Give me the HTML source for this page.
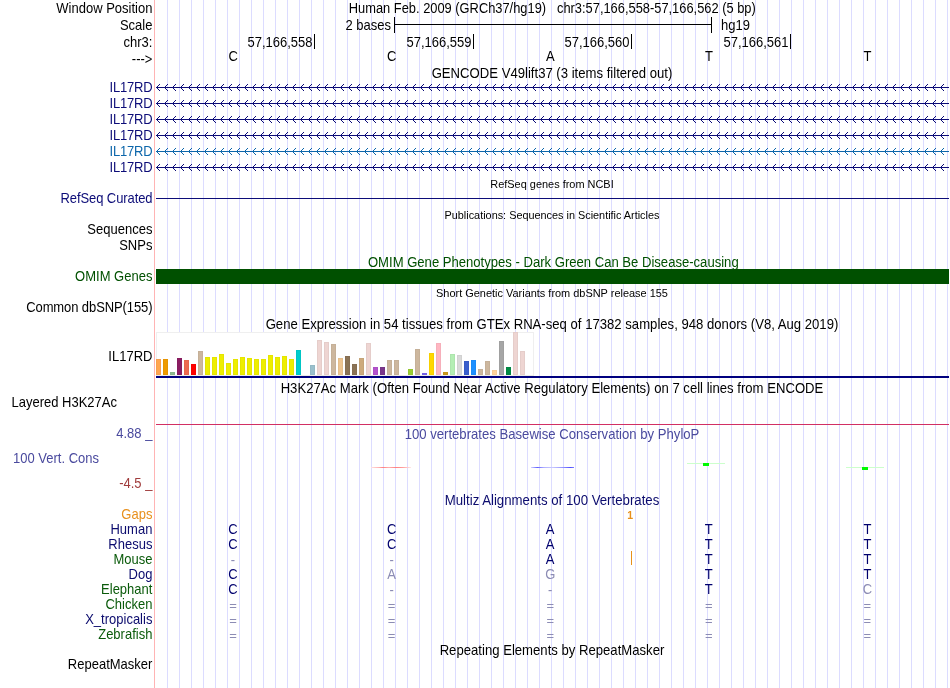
<!DOCTYPE html>
<html><head><meta charset="utf-8"><title>UCSC Genome Browser</title>
<style>
html,body{margin:0;padding:0;background:#fff;}
body{width:950px;height:688px;position:relative;overflow:hidden;font-family:"Liberation Sans",sans-serif;font-size:13px;color:#000;}
.t{position:absolute;white-space:pre;line-height:15px;height:15px;font-size:13px;transform:scaleY(1.09);transform-origin:0 12px;}
.s{font-size:10.95px;}
.c{font-size:13.13px;}
.c.s{font-size:10.95px;transform:none;}
.r{right:797.6px;text-align:right;}
.c{left:155px;width:794px;text-align:center;}
.b{position:absolute;width:20px;text-align:center;margin-left:-10px;line-height:15px;height:15px;font-size:13px;transform:scaleY(1.09);transform-origin:0 12px;}
.x{position:absolute;}
svg{position:absolute;left:0;top:0;}
#pg{position:absolute;left:0;top:0;width:950px;height:688px;will-change:transform;}
</style></head><body><div id="pg">
<svg width="950" height="688" viewBox="0 0 950 688" shape-rendering="crispEdges">
<rect x="154" y="0" width="1" height="688" fill="#ffb4b4"/>
<path d="M167.5 0V688M179.5 0V688M191.5 0V688M203.5 0V688M215.5 0V688M227.5 0V688M239.5 0V688M251.5 0V688M263.5 0V688M275.5 0V688M287.5 0V688M299.5 0V688M311.5 0V688M323.5 0V688M335.5 0V688M347.5 0V688M359.5 0V688M371.5 0V688M383.5 0V688M395.5 0V688M407.5 0V688M419.5 0V688M431.5 0V688M443.5 0V688M455.5 0V688M467.5 0V688M479.5 0V688M491.5 0V688M503.5 0V688M515.5 0V688M527.5 0V688M539.5 0V688M551.5 0V688M563.5 0V688M575.5 0V688M587.5 0V688M599.5 0V688M611.5 0V688M623.5 0V688M635.5 0V688M647.5 0V688M659.5 0V688M671.5 0V688M683.5 0V688M695.5 0V688M707.5 0V688M719.5 0V688M731.5 0V688M743.5 0V688M755.5 0V688M767.5 0V688M779.5 0V688M791.5 0V688M803.5 0V688M815.5 0V688M827.5 0V688M839.5 0V688M851.5 0V688M863.5 0V688M875.5 0V688M887.5 0V688M899.5 0V688M911.5 0V688M923.5 0V688M935.5 0V688M947.5 0V688" stroke="#dcdcff" stroke-width="1" fill="none"/>
</svg>
<div class="t r" style="top:0.90px">Window Position</div>
<div class="t r" style="top:17.80px">Scale</div>
<div class="t r" style="top:34.80px">chr3:</div>
<div class="t r" style="top:51.70px">---&gt;</div>
<div class="t" id="tp1" style="left:348.8px;top:0.5px;font-size:12.87px">Human Feb. 2009 (GRCh37/hg19)</div>
<div class="t" id="tp2" style="left:557px;top:0.5px;font-size:12.87px">chr3:57,166,558-57,166,562 (5 bp)</div>
<div class="x" style="left:394px;top:24px;width:318px;height:1px;background:#000"></div>
<div class="x" style="left:394px;top:17px;width:1px;height:16px;background:#000"></div>
<div class="x" style="left:711px;top:17px;width:1px;height:16px;background:#000"></div>
<div class="t" style="right:559px;top:17.5px;text-align:right">2 bases</div>
<div class="t" style="left:721px;top:17.5px">hg19</div>
<div class="x" style="left:314px;top:34px;width:1px;height:15px;background:#000"></div>
<div class="t" style="right:637.5px;top:35px;text-align:right">57,166,558</div>
<div class="x" style="left:473px;top:34px;width:1px;height:15px;background:#000"></div>
<div class="t" style="right:478.5px;top:35px;text-align:right">57,166,559</div>
<div class="x" style="left:631px;top:34px;width:1px;height:15px;background:#000"></div>
<div class="t" style="right:320.5px;top:35px;text-align:right">57,166,560</div>
<div class="x" style="left:790px;top:34px;width:1px;height:15px;background:#000"></div>
<div class="t" style="right:161.5px;top:35px;text-align:right">57,166,561</div>
<div class="b" style="left:233.2px;top:49px">C</div>
<div class="b" style="left:391.8px;top:49px">C</div>
<div class="b" style="left:550.4px;top:49px">A</div>
<div class="b" style="left:709.0px;top:49px">T</div>
<div class="b" style="left:867.6px;top:49px">T</div>
<div class="t c" style="top:66.00px">GENCODE V49lift37 (3 items filtered out)</div>
<svg width="950" height="688" viewBox="0 0 950 688">
<defs><pattern id="ch" x="156.5" y="0" width="8" height="7" patternUnits="userSpaceOnUse"><path d="M3.5 0.5L0.5 3.5L3.5 6.5" fill="none" stroke-width="1"/></pattern></defs>
<g stroke="#0c0c78" fill="none"><path d="M156 87.5H949" stroke-width="1" shape-rendering="crispEdges"/>
<path d="M160 84l-3.5 3.5l3.5 3.5M168 84l-3.5 3.5l3.5 3.5M176 84l-3.5 3.5l3.5 3.5M184 84l-3.5 3.5l3.5 3.5M192 84l-3.5 3.5l3.5 3.5M200 84l-3.5 3.5l3.5 3.5M208 84l-3.5 3.5l3.5 3.5M216 84l-3.5 3.5l3.5 3.5M224 84l-3.5 3.5l3.5 3.5M232 84l-3.5 3.5l3.5 3.5M240 84l-3.5 3.5l3.5 3.5M248 84l-3.5 3.5l3.5 3.5M256 84l-3.5 3.5l3.5 3.5M264 84l-3.5 3.5l3.5 3.5M272 84l-3.5 3.5l3.5 3.5M280 84l-3.5 3.5l3.5 3.5M288 84l-3.5 3.5l3.5 3.5M296 84l-3.5 3.5l3.5 3.5M304 84l-3.5 3.5l3.5 3.5M312 84l-3.5 3.5l3.5 3.5M320 84l-3.5 3.5l3.5 3.5M328 84l-3.5 3.5l3.5 3.5M336 84l-3.5 3.5l3.5 3.5M344 84l-3.5 3.5l3.5 3.5M352 84l-3.5 3.5l3.5 3.5M360 84l-3.5 3.5l3.5 3.5M368 84l-3.5 3.5l3.5 3.5M376 84l-3.5 3.5l3.5 3.5M384 84l-3.5 3.5l3.5 3.5M392 84l-3.5 3.5l3.5 3.5M400 84l-3.5 3.5l3.5 3.5M408 84l-3.5 3.5l3.5 3.5M416 84l-3.5 3.5l3.5 3.5M424 84l-3.5 3.5l3.5 3.5M432 84l-3.5 3.5l3.5 3.5M440 84l-3.5 3.5l3.5 3.5M448 84l-3.5 3.5l3.5 3.5M456 84l-3.5 3.5l3.5 3.5M464 84l-3.5 3.5l3.5 3.5M472 84l-3.5 3.5l3.5 3.5M480 84l-3.5 3.5l3.5 3.5M488 84l-3.5 3.5l3.5 3.5M496 84l-3.5 3.5l3.5 3.5M504 84l-3.5 3.5l3.5 3.5M512 84l-3.5 3.5l3.5 3.5M520 84l-3.5 3.5l3.5 3.5M528 84l-3.5 3.5l3.5 3.5M536 84l-3.5 3.5l3.5 3.5M544 84l-3.5 3.5l3.5 3.5M552 84l-3.5 3.5l3.5 3.5M560 84l-3.5 3.5l3.5 3.5M568 84l-3.5 3.5l3.5 3.5M576 84l-3.5 3.5l3.5 3.5M584 84l-3.5 3.5l3.5 3.5M592 84l-3.5 3.5l3.5 3.5M600 84l-3.5 3.5l3.5 3.5M608 84l-3.5 3.5l3.5 3.5M616 84l-3.5 3.5l3.5 3.5M624 84l-3.5 3.5l3.5 3.5M632 84l-3.5 3.5l3.5 3.5M640 84l-3.5 3.5l3.5 3.5M648 84l-3.5 3.5l3.5 3.5M656 84l-3.5 3.5l3.5 3.5M664 84l-3.5 3.5l3.5 3.5M672 84l-3.5 3.5l3.5 3.5M680 84l-3.5 3.5l3.5 3.5M688 84l-3.5 3.5l3.5 3.5M696 84l-3.5 3.5l3.5 3.5M704 84l-3.5 3.5l3.5 3.5M712 84l-3.5 3.5l3.5 3.5M720 84l-3.5 3.5l3.5 3.5M728 84l-3.5 3.5l3.5 3.5M736 84l-3.5 3.5l3.5 3.5M744 84l-3.5 3.5l3.5 3.5M752 84l-3.5 3.5l3.5 3.5M760 84l-3.5 3.5l3.5 3.5M768 84l-3.5 3.5l3.5 3.5M776 84l-3.5 3.5l3.5 3.5M784 84l-3.5 3.5l3.5 3.5M792 84l-3.5 3.5l3.5 3.5M800 84l-3.5 3.5l3.5 3.5M808 84l-3.5 3.5l3.5 3.5M816 84l-3.5 3.5l3.5 3.5M824 84l-3.5 3.5l3.5 3.5M832 84l-3.5 3.5l3.5 3.5M840 84l-3.5 3.5l3.5 3.5M848 84l-3.5 3.5l3.5 3.5M856 84l-3.5 3.5l3.5 3.5M864 84l-3.5 3.5l3.5 3.5M872 84l-3.5 3.5l3.5 3.5M880 84l-3.5 3.5l3.5 3.5M888 84l-3.5 3.5l3.5 3.5M896 84l-3.5 3.5l3.5 3.5M904 84l-3.5 3.5l3.5 3.5M912 84l-3.5 3.5l3.5 3.5M920 84l-3.5 3.5l3.5 3.5M928 84l-3.5 3.5l3.5 3.5M936 84l-3.5 3.5l3.5 3.5M944 84l-3.5 3.5l3.5 3.5" stroke-width="1"/></g>
<g stroke="#0c0c78" fill="none"><path d="M156 103.5H949" stroke-width="1" shape-rendering="crispEdges"/>
<path d="M160 100l-3.5 3.5l3.5 3.5M168 100l-3.5 3.5l3.5 3.5M176 100l-3.5 3.5l3.5 3.5M184 100l-3.5 3.5l3.5 3.5M192 100l-3.5 3.5l3.5 3.5M200 100l-3.5 3.5l3.5 3.5M208 100l-3.5 3.5l3.5 3.5M216 100l-3.5 3.5l3.5 3.5M224 100l-3.5 3.5l3.5 3.5M232 100l-3.5 3.5l3.5 3.5M240 100l-3.5 3.5l3.5 3.5M248 100l-3.5 3.5l3.5 3.5M256 100l-3.5 3.5l3.5 3.5M264 100l-3.5 3.5l3.5 3.5M272 100l-3.5 3.5l3.5 3.5M280 100l-3.5 3.5l3.5 3.5M288 100l-3.5 3.5l3.5 3.5M296 100l-3.5 3.5l3.5 3.5M304 100l-3.5 3.5l3.5 3.5M312 100l-3.5 3.5l3.5 3.5M320 100l-3.5 3.5l3.5 3.5M328 100l-3.5 3.5l3.5 3.5M336 100l-3.5 3.5l3.5 3.5M344 100l-3.5 3.5l3.5 3.5M352 100l-3.5 3.5l3.5 3.5M360 100l-3.5 3.5l3.5 3.5M368 100l-3.5 3.5l3.5 3.5M376 100l-3.5 3.5l3.5 3.5M384 100l-3.5 3.5l3.5 3.5M392 100l-3.5 3.5l3.5 3.5M400 100l-3.5 3.5l3.5 3.5M408 100l-3.5 3.5l3.5 3.5M416 100l-3.5 3.5l3.5 3.5M424 100l-3.5 3.5l3.5 3.5M432 100l-3.5 3.5l3.5 3.5M440 100l-3.5 3.5l3.5 3.5M448 100l-3.5 3.5l3.5 3.5M456 100l-3.5 3.5l3.5 3.5M464 100l-3.5 3.5l3.5 3.5M472 100l-3.5 3.5l3.5 3.5M480 100l-3.5 3.5l3.5 3.5M488 100l-3.5 3.5l3.5 3.5M496 100l-3.5 3.5l3.5 3.5M504 100l-3.5 3.5l3.5 3.5M512 100l-3.5 3.5l3.5 3.5M520 100l-3.5 3.5l3.5 3.5M528 100l-3.5 3.5l3.5 3.5M536 100l-3.5 3.5l3.5 3.5M544 100l-3.5 3.5l3.5 3.5M552 100l-3.5 3.5l3.5 3.5M560 100l-3.5 3.5l3.5 3.5M568 100l-3.5 3.5l3.5 3.5M576 100l-3.5 3.5l3.5 3.5M584 100l-3.5 3.5l3.5 3.5M592 100l-3.5 3.5l3.5 3.5M600 100l-3.5 3.5l3.5 3.5M608 100l-3.5 3.5l3.5 3.5M616 100l-3.5 3.5l3.5 3.5M624 100l-3.5 3.5l3.5 3.5M632 100l-3.5 3.5l3.5 3.5M640 100l-3.5 3.5l3.5 3.5M648 100l-3.5 3.5l3.5 3.5M656 100l-3.5 3.5l3.5 3.5M664 100l-3.5 3.5l3.5 3.5M672 100l-3.5 3.5l3.5 3.5M680 100l-3.5 3.5l3.5 3.5M688 100l-3.5 3.5l3.5 3.5M696 100l-3.5 3.5l3.5 3.5M704 100l-3.5 3.5l3.5 3.5M712 100l-3.5 3.5l3.5 3.5M720 100l-3.5 3.5l3.5 3.5M728 100l-3.5 3.5l3.5 3.5M736 100l-3.5 3.5l3.5 3.5M744 100l-3.5 3.5l3.5 3.5M752 100l-3.5 3.5l3.5 3.5M760 100l-3.5 3.5l3.5 3.5M768 100l-3.5 3.5l3.5 3.5M776 100l-3.5 3.5l3.5 3.5M784 100l-3.5 3.5l3.5 3.5M792 100l-3.5 3.5l3.5 3.5M800 100l-3.5 3.5l3.5 3.5M808 100l-3.5 3.5l3.5 3.5M816 100l-3.5 3.5l3.5 3.5M824 100l-3.5 3.5l3.5 3.5M832 100l-3.5 3.5l3.5 3.5M840 100l-3.5 3.5l3.5 3.5M848 100l-3.5 3.5l3.5 3.5M856 100l-3.5 3.5l3.5 3.5M864 100l-3.5 3.5l3.5 3.5M872 100l-3.5 3.5l3.5 3.5M880 100l-3.5 3.5l3.5 3.5M888 100l-3.5 3.5l3.5 3.5M896 100l-3.5 3.5l3.5 3.5M904 100l-3.5 3.5l3.5 3.5M912 100l-3.5 3.5l3.5 3.5M920 100l-3.5 3.5l3.5 3.5M928 100l-3.5 3.5l3.5 3.5M936 100l-3.5 3.5l3.5 3.5M944 100l-3.5 3.5l3.5 3.5" stroke-width="1"/></g>
<g stroke="#0c0c78" fill="none"><path d="M156 119.5H949" stroke-width="1" shape-rendering="crispEdges"/>
<path d="M160 116l-3.5 3.5l3.5 3.5M168 116l-3.5 3.5l3.5 3.5M176 116l-3.5 3.5l3.5 3.5M184 116l-3.5 3.5l3.5 3.5M192 116l-3.5 3.5l3.5 3.5M200 116l-3.5 3.5l3.5 3.5M208 116l-3.5 3.5l3.5 3.5M216 116l-3.5 3.5l3.5 3.5M224 116l-3.5 3.5l3.5 3.5M232 116l-3.5 3.5l3.5 3.5M240 116l-3.5 3.5l3.5 3.5M248 116l-3.5 3.5l3.5 3.5M256 116l-3.5 3.5l3.5 3.5M264 116l-3.5 3.5l3.5 3.5M272 116l-3.5 3.5l3.5 3.5M280 116l-3.5 3.5l3.5 3.5M288 116l-3.5 3.5l3.5 3.5M296 116l-3.5 3.5l3.5 3.5M304 116l-3.5 3.5l3.5 3.5M312 116l-3.5 3.5l3.5 3.5M320 116l-3.5 3.5l3.5 3.5M328 116l-3.5 3.5l3.5 3.5M336 116l-3.5 3.5l3.5 3.5M344 116l-3.5 3.5l3.5 3.5M352 116l-3.5 3.5l3.5 3.5M360 116l-3.5 3.5l3.5 3.5M368 116l-3.5 3.5l3.5 3.5M376 116l-3.5 3.5l3.5 3.5M384 116l-3.5 3.5l3.5 3.5M392 116l-3.5 3.5l3.5 3.5M400 116l-3.5 3.5l3.5 3.5M408 116l-3.5 3.5l3.5 3.5M416 116l-3.5 3.5l3.5 3.5M424 116l-3.5 3.5l3.5 3.5M432 116l-3.5 3.5l3.5 3.5M440 116l-3.5 3.5l3.5 3.5M448 116l-3.5 3.5l3.5 3.5M456 116l-3.5 3.5l3.5 3.5M464 116l-3.5 3.5l3.5 3.5M472 116l-3.5 3.5l3.5 3.5M480 116l-3.5 3.5l3.5 3.5M488 116l-3.5 3.5l3.5 3.5M496 116l-3.5 3.5l3.5 3.5M504 116l-3.5 3.5l3.5 3.5M512 116l-3.5 3.5l3.5 3.5M520 116l-3.5 3.5l3.5 3.5M528 116l-3.5 3.5l3.5 3.5M536 116l-3.5 3.5l3.5 3.5M544 116l-3.5 3.5l3.5 3.5M552 116l-3.5 3.5l3.5 3.5M560 116l-3.5 3.5l3.5 3.5M568 116l-3.5 3.5l3.5 3.5M576 116l-3.5 3.5l3.5 3.5M584 116l-3.5 3.5l3.5 3.5M592 116l-3.5 3.5l3.5 3.5M600 116l-3.5 3.5l3.5 3.5M608 116l-3.5 3.5l3.5 3.5M616 116l-3.5 3.5l3.5 3.5M624 116l-3.5 3.5l3.5 3.5M632 116l-3.5 3.5l3.5 3.5M640 116l-3.5 3.5l3.5 3.5M648 116l-3.5 3.5l3.5 3.5M656 116l-3.5 3.5l3.5 3.5M664 116l-3.5 3.5l3.5 3.5M672 116l-3.5 3.5l3.5 3.5M680 116l-3.5 3.5l3.5 3.5M688 116l-3.5 3.5l3.5 3.5M696 116l-3.5 3.5l3.5 3.5M704 116l-3.5 3.5l3.5 3.5M712 116l-3.5 3.5l3.5 3.5M720 116l-3.5 3.5l3.5 3.5M728 116l-3.5 3.5l3.5 3.5M736 116l-3.5 3.5l3.5 3.5M744 116l-3.5 3.5l3.5 3.5M752 116l-3.5 3.5l3.5 3.5M760 116l-3.5 3.5l3.5 3.5M768 116l-3.5 3.5l3.5 3.5M776 116l-3.5 3.5l3.5 3.5M784 116l-3.5 3.5l3.5 3.5M792 116l-3.5 3.5l3.5 3.5M800 116l-3.5 3.5l3.5 3.5M808 116l-3.5 3.5l3.5 3.5M816 116l-3.5 3.5l3.5 3.5M824 116l-3.5 3.5l3.5 3.5M832 116l-3.5 3.5l3.5 3.5M840 116l-3.5 3.5l3.5 3.5M848 116l-3.5 3.5l3.5 3.5M856 116l-3.5 3.5l3.5 3.5M864 116l-3.5 3.5l3.5 3.5M872 116l-3.5 3.5l3.5 3.5M880 116l-3.5 3.5l3.5 3.5M888 116l-3.5 3.5l3.5 3.5M896 116l-3.5 3.5l3.5 3.5M904 116l-3.5 3.5l3.5 3.5M912 116l-3.5 3.5l3.5 3.5M920 116l-3.5 3.5l3.5 3.5M928 116l-3.5 3.5l3.5 3.5M936 116l-3.5 3.5l3.5 3.5M944 116l-3.5 3.5l3.5 3.5" stroke-width="1"/></g>
<g stroke="#0c0c78" fill="none"><path d="M156 135.5H949" stroke-width="1" shape-rendering="crispEdges"/>
<path d="M160 132l-3.5 3.5l3.5 3.5M168 132l-3.5 3.5l3.5 3.5M176 132l-3.5 3.5l3.5 3.5M184 132l-3.5 3.5l3.5 3.5M192 132l-3.5 3.5l3.5 3.5M200 132l-3.5 3.5l3.5 3.5M208 132l-3.5 3.5l3.5 3.5M216 132l-3.5 3.5l3.5 3.5M224 132l-3.5 3.5l3.5 3.5M232 132l-3.5 3.5l3.5 3.5M240 132l-3.5 3.5l3.5 3.5M248 132l-3.5 3.5l3.5 3.5M256 132l-3.5 3.5l3.5 3.5M264 132l-3.5 3.5l3.5 3.5M272 132l-3.5 3.5l3.5 3.5M280 132l-3.5 3.5l3.5 3.5M288 132l-3.5 3.5l3.5 3.5M296 132l-3.5 3.5l3.5 3.5M304 132l-3.5 3.5l3.5 3.5M312 132l-3.5 3.5l3.5 3.5M320 132l-3.5 3.5l3.5 3.5M328 132l-3.5 3.5l3.5 3.5M336 132l-3.5 3.5l3.5 3.5M344 132l-3.5 3.5l3.5 3.5M352 132l-3.5 3.5l3.5 3.5M360 132l-3.5 3.5l3.5 3.5M368 132l-3.5 3.5l3.5 3.5M376 132l-3.5 3.5l3.5 3.5M384 132l-3.5 3.5l3.5 3.5M392 132l-3.5 3.5l3.5 3.5M400 132l-3.5 3.5l3.5 3.5M408 132l-3.5 3.5l3.5 3.5M416 132l-3.5 3.5l3.5 3.5M424 132l-3.5 3.5l3.5 3.5M432 132l-3.5 3.5l3.5 3.5M440 132l-3.5 3.5l3.5 3.5M448 132l-3.5 3.5l3.5 3.5M456 132l-3.5 3.5l3.5 3.5M464 132l-3.5 3.5l3.5 3.5M472 132l-3.5 3.5l3.5 3.5M480 132l-3.5 3.5l3.5 3.5M488 132l-3.5 3.5l3.5 3.5M496 132l-3.5 3.5l3.5 3.5M504 132l-3.5 3.5l3.5 3.5M512 132l-3.5 3.5l3.5 3.5M520 132l-3.5 3.5l3.5 3.5M528 132l-3.5 3.5l3.5 3.5M536 132l-3.5 3.5l3.5 3.5M544 132l-3.5 3.5l3.5 3.5M552 132l-3.5 3.5l3.5 3.5M560 132l-3.5 3.5l3.5 3.5M568 132l-3.5 3.5l3.5 3.5M576 132l-3.5 3.5l3.5 3.5M584 132l-3.5 3.5l3.5 3.5M592 132l-3.5 3.5l3.5 3.5M600 132l-3.5 3.5l3.5 3.5M608 132l-3.5 3.5l3.5 3.5M616 132l-3.5 3.5l3.5 3.5M624 132l-3.5 3.5l3.5 3.5M632 132l-3.5 3.5l3.5 3.5M640 132l-3.5 3.5l3.5 3.5M648 132l-3.5 3.5l3.5 3.5M656 132l-3.5 3.5l3.5 3.5M664 132l-3.5 3.5l3.5 3.5M672 132l-3.5 3.5l3.5 3.5M680 132l-3.5 3.5l3.5 3.5M688 132l-3.5 3.5l3.5 3.5M696 132l-3.5 3.5l3.5 3.5M704 132l-3.5 3.5l3.5 3.5M712 132l-3.5 3.5l3.5 3.5M720 132l-3.5 3.5l3.5 3.5M728 132l-3.5 3.5l3.5 3.5M736 132l-3.5 3.5l3.5 3.5M744 132l-3.5 3.5l3.5 3.5M752 132l-3.5 3.5l3.5 3.5M760 132l-3.5 3.5l3.5 3.5M768 132l-3.5 3.5l3.5 3.5M776 132l-3.5 3.5l3.5 3.5M784 132l-3.5 3.5l3.5 3.5M792 132l-3.5 3.5l3.5 3.5M800 132l-3.5 3.5l3.5 3.5M808 132l-3.5 3.5l3.5 3.5M816 132l-3.5 3.5l3.5 3.5M824 132l-3.5 3.5l3.5 3.5M832 132l-3.5 3.5l3.5 3.5M840 132l-3.5 3.5l3.5 3.5M848 132l-3.5 3.5l3.5 3.5M856 132l-3.5 3.5l3.5 3.5M864 132l-3.5 3.5l3.5 3.5M872 132l-3.5 3.5l3.5 3.5M880 132l-3.5 3.5l3.5 3.5M888 132l-3.5 3.5l3.5 3.5M896 132l-3.5 3.5l3.5 3.5M904 132l-3.5 3.5l3.5 3.5M912 132l-3.5 3.5l3.5 3.5M920 132l-3.5 3.5l3.5 3.5M928 132l-3.5 3.5l3.5 3.5M936 132l-3.5 3.5l3.5 3.5M944 132l-3.5 3.5l3.5 3.5" stroke-width="1"/></g>
<g stroke="#0c66aa" fill="none"><path d="M156 151.5H949" stroke-width="1" shape-rendering="crispEdges"/>
<path d="M160 148l-3.5 3.5l3.5 3.5M168 148l-3.5 3.5l3.5 3.5M176 148l-3.5 3.5l3.5 3.5M184 148l-3.5 3.5l3.5 3.5M192 148l-3.5 3.5l3.5 3.5M200 148l-3.5 3.5l3.5 3.5M208 148l-3.5 3.5l3.5 3.5M216 148l-3.5 3.5l3.5 3.5M224 148l-3.5 3.5l3.5 3.5M232 148l-3.5 3.5l3.5 3.5M240 148l-3.5 3.5l3.5 3.5M248 148l-3.5 3.5l3.5 3.5M256 148l-3.5 3.5l3.5 3.5M264 148l-3.5 3.5l3.5 3.5M272 148l-3.5 3.5l3.5 3.5M280 148l-3.5 3.5l3.5 3.5M288 148l-3.5 3.5l3.5 3.5M296 148l-3.5 3.5l3.5 3.5M304 148l-3.5 3.5l3.5 3.5M312 148l-3.5 3.5l3.5 3.5M320 148l-3.5 3.5l3.5 3.5M328 148l-3.5 3.5l3.5 3.5M336 148l-3.5 3.5l3.5 3.5M344 148l-3.5 3.5l3.5 3.5M352 148l-3.5 3.5l3.5 3.5M360 148l-3.5 3.5l3.5 3.5M368 148l-3.5 3.5l3.5 3.5M376 148l-3.5 3.5l3.5 3.5M384 148l-3.5 3.5l3.5 3.5M392 148l-3.5 3.5l3.5 3.5M400 148l-3.5 3.5l3.5 3.5M408 148l-3.5 3.5l3.5 3.5M416 148l-3.5 3.5l3.5 3.5M424 148l-3.5 3.5l3.5 3.5M432 148l-3.5 3.5l3.5 3.5M440 148l-3.5 3.5l3.5 3.5M448 148l-3.5 3.5l3.5 3.5M456 148l-3.5 3.5l3.5 3.5M464 148l-3.5 3.5l3.5 3.5M472 148l-3.5 3.5l3.5 3.5M480 148l-3.5 3.5l3.5 3.5M488 148l-3.5 3.5l3.5 3.5M496 148l-3.5 3.5l3.5 3.5M504 148l-3.5 3.5l3.5 3.5M512 148l-3.5 3.5l3.5 3.5M520 148l-3.5 3.5l3.5 3.5M528 148l-3.5 3.5l3.5 3.5M536 148l-3.5 3.5l3.5 3.5M544 148l-3.5 3.5l3.5 3.5M552 148l-3.5 3.5l3.5 3.5M560 148l-3.5 3.5l3.5 3.5M568 148l-3.5 3.5l3.5 3.5M576 148l-3.5 3.5l3.5 3.5M584 148l-3.5 3.5l3.5 3.5M592 148l-3.5 3.5l3.5 3.5M600 148l-3.5 3.5l3.5 3.5M608 148l-3.5 3.5l3.5 3.5M616 148l-3.5 3.5l3.5 3.5M624 148l-3.5 3.5l3.5 3.5M632 148l-3.5 3.5l3.5 3.5M640 148l-3.5 3.5l3.5 3.5M648 148l-3.5 3.5l3.5 3.5M656 148l-3.5 3.5l3.5 3.5M664 148l-3.5 3.5l3.5 3.5M672 148l-3.5 3.5l3.5 3.5M680 148l-3.5 3.5l3.5 3.5M688 148l-3.5 3.5l3.5 3.5M696 148l-3.5 3.5l3.5 3.5M704 148l-3.5 3.5l3.5 3.5M712 148l-3.5 3.5l3.5 3.5M720 148l-3.5 3.5l3.5 3.5M728 148l-3.5 3.5l3.5 3.5M736 148l-3.5 3.5l3.5 3.5M744 148l-3.5 3.5l3.5 3.5M752 148l-3.5 3.5l3.5 3.5M760 148l-3.5 3.5l3.5 3.5M768 148l-3.5 3.5l3.5 3.5M776 148l-3.5 3.5l3.5 3.5M784 148l-3.5 3.5l3.5 3.5M792 148l-3.5 3.5l3.5 3.5M800 148l-3.5 3.5l3.5 3.5M808 148l-3.5 3.5l3.5 3.5M816 148l-3.5 3.5l3.5 3.5M824 148l-3.5 3.5l3.5 3.5M832 148l-3.5 3.5l3.5 3.5M840 148l-3.5 3.5l3.5 3.5M848 148l-3.5 3.5l3.5 3.5M856 148l-3.5 3.5l3.5 3.5M864 148l-3.5 3.5l3.5 3.5M872 148l-3.5 3.5l3.5 3.5M880 148l-3.5 3.5l3.5 3.5M888 148l-3.5 3.5l3.5 3.5M896 148l-3.5 3.5l3.5 3.5M904 148l-3.5 3.5l3.5 3.5M912 148l-3.5 3.5l3.5 3.5M920 148l-3.5 3.5l3.5 3.5M928 148l-3.5 3.5l3.5 3.5M936 148l-3.5 3.5l3.5 3.5M944 148l-3.5 3.5l3.5 3.5" stroke-width="1"/></g>
<g stroke="#0c0c78" fill="none"><path d="M156 167.5H949" stroke-width="1" shape-rendering="crispEdges"/>
<path d="M160 164l-3.5 3.5l3.5 3.5M168 164l-3.5 3.5l3.5 3.5M176 164l-3.5 3.5l3.5 3.5M184 164l-3.5 3.5l3.5 3.5M192 164l-3.5 3.5l3.5 3.5M200 164l-3.5 3.5l3.5 3.5M208 164l-3.5 3.5l3.5 3.5M216 164l-3.5 3.5l3.5 3.5M224 164l-3.5 3.5l3.5 3.5M232 164l-3.5 3.5l3.5 3.5M240 164l-3.5 3.5l3.5 3.5M248 164l-3.5 3.5l3.5 3.5M256 164l-3.5 3.5l3.5 3.5M264 164l-3.5 3.5l3.5 3.5M272 164l-3.5 3.5l3.5 3.5M280 164l-3.5 3.5l3.5 3.5M288 164l-3.5 3.5l3.5 3.5M296 164l-3.5 3.5l3.5 3.5M304 164l-3.5 3.5l3.5 3.5M312 164l-3.5 3.5l3.5 3.5M320 164l-3.5 3.5l3.5 3.5M328 164l-3.5 3.5l3.5 3.5M336 164l-3.5 3.5l3.5 3.5M344 164l-3.5 3.5l3.5 3.5M352 164l-3.5 3.5l3.5 3.5M360 164l-3.5 3.5l3.5 3.5M368 164l-3.5 3.5l3.5 3.5M376 164l-3.5 3.5l3.5 3.5M384 164l-3.5 3.5l3.5 3.5M392 164l-3.5 3.5l3.5 3.5M400 164l-3.5 3.5l3.5 3.5M408 164l-3.5 3.5l3.5 3.5M416 164l-3.5 3.5l3.5 3.5M424 164l-3.5 3.5l3.5 3.5M432 164l-3.5 3.5l3.5 3.5M440 164l-3.5 3.5l3.5 3.5M448 164l-3.5 3.5l3.5 3.5M456 164l-3.5 3.5l3.5 3.5M464 164l-3.5 3.5l3.5 3.5M472 164l-3.5 3.5l3.5 3.5M480 164l-3.5 3.5l3.5 3.5M488 164l-3.5 3.5l3.5 3.5M496 164l-3.5 3.5l3.5 3.5M504 164l-3.5 3.5l3.5 3.5M512 164l-3.5 3.5l3.5 3.5M520 164l-3.5 3.5l3.5 3.5M528 164l-3.5 3.5l3.5 3.5M536 164l-3.5 3.5l3.5 3.5M544 164l-3.5 3.5l3.5 3.5M552 164l-3.5 3.5l3.5 3.5M560 164l-3.5 3.5l3.5 3.5M568 164l-3.5 3.5l3.5 3.5M576 164l-3.5 3.5l3.5 3.5M584 164l-3.5 3.5l3.5 3.5M592 164l-3.5 3.5l3.5 3.5M600 164l-3.5 3.5l3.5 3.5M608 164l-3.5 3.5l3.5 3.5M616 164l-3.5 3.5l3.5 3.5M624 164l-3.5 3.5l3.5 3.5M632 164l-3.5 3.5l3.5 3.5M640 164l-3.5 3.5l3.5 3.5M648 164l-3.5 3.5l3.5 3.5M656 164l-3.5 3.5l3.5 3.5M664 164l-3.5 3.5l3.5 3.5M672 164l-3.5 3.5l3.5 3.5M680 164l-3.5 3.5l3.5 3.5M688 164l-3.5 3.5l3.5 3.5M696 164l-3.5 3.5l3.5 3.5M704 164l-3.5 3.5l3.5 3.5M712 164l-3.5 3.5l3.5 3.5M720 164l-3.5 3.5l3.5 3.5M728 164l-3.5 3.5l3.5 3.5M736 164l-3.5 3.5l3.5 3.5M744 164l-3.5 3.5l3.5 3.5M752 164l-3.5 3.5l3.5 3.5M760 164l-3.5 3.5l3.5 3.5M768 164l-3.5 3.5l3.5 3.5M776 164l-3.5 3.5l3.5 3.5M784 164l-3.5 3.5l3.5 3.5M792 164l-3.5 3.5l3.5 3.5M800 164l-3.5 3.5l3.5 3.5M808 164l-3.5 3.5l3.5 3.5M816 164l-3.5 3.5l3.5 3.5M824 164l-3.5 3.5l3.5 3.5M832 164l-3.5 3.5l3.5 3.5M840 164l-3.5 3.5l3.5 3.5M848 164l-3.5 3.5l3.5 3.5M856 164l-3.5 3.5l3.5 3.5M864 164l-3.5 3.5l3.5 3.5M872 164l-3.5 3.5l3.5 3.5M880 164l-3.5 3.5l3.5 3.5M888 164l-3.5 3.5l3.5 3.5M896 164l-3.5 3.5l3.5 3.5M904 164l-3.5 3.5l3.5 3.5M912 164l-3.5 3.5l3.5 3.5M920 164l-3.5 3.5l3.5 3.5M928 164l-3.5 3.5l3.5 3.5M936 164l-3.5 3.5l3.5 3.5M944 164l-3.5 3.5l3.5 3.5" stroke-width="1"/></g>
<path d="M156 198.5H949" stroke="#0c0c78" stroke-width="1" shape-rendering="crispEdges"/>
</svg>
<div class="t r" style="top:80.30px;letter-spacing:-0.2px;color:#0c0c78">IL17RD</div>
<div class="t r" style="top:96.30px;letter-spacing:-0.2px;color:#0c0c78">IL17RD</div>
<div class="t r" style="top:112.30px;letter-spacing:-0.2px;color:#0c0c78">IL17RD</div>
<div class="t r" style="top:128.30px;letter-spacing:-0.2px;color:#0c0c78">IL17RD</div>
<div class="t r" style="top:144.30px;letter-spacing:-0.2px;color:#0c66aa">IL17RD</div>
<div class="t r" style="top:160.30px;letter-spacing:-0.2px;color:#0c0c78">IL17RD</div>
<div class="t c s" style="top:176.70px">RefSeq genes from NCBI</div>
<div class="t r" style="top:191.30px;letter-spacing:-0.1px;color:#0c0c78">RefSeq Curated</div>
<div class="t c s" style="top:207.70px;font-size:10.87px">Publications: Sequences in Scientific Articles</div>
<div class="t r" style="top:222.30px">Sequences</div>
<div class="t r" style="top:238.30px">SNPs</div>
<div class="t c" style="top:254.90px;font-size:13.09px;margin-left:1.3px;color:#005000">OMIM Gene Phenotypes - Dark Green Can Be Disease-causing</div>
<div class="x" style="left:156px;top:269px;width:793px;height:15px;background:#005000"></div>
<div class="t r" style="top:269.30px;color:#005000">OMIM Genes</div>
<div class="t c s" style="top:285.70px">Short Genetic Variants from dbSNP release 155</div>
<div class="t r" style="top:300.30px;letter-spacing:-0.1px">Common dbSNP(155)</div>
<div class="t c" style="top:316.90px">Gene Expression in 54 tissues from GTEx RNA-seq of 17382 samples, 948 donors (V8, Aug 2019)</div>
<div class="x" style="left:156px;top:332px;width:378px;height:44px;background:#fff;border:1px solid #efefef;border-bottom:none;box-sizing:border-box"></div>
<div class="x" style="left:156px;top:375px;width:378px;height:1px;background:#ecece6"></div>
<div class="x" style="left:156px;top:359px;width:5px;height:16px;background:#ffa54f;box-shadow:inset 0 0 0 1px rgba(0,0,0,.035)"></div>
<div class="x" style="left:163px;top:359px;width:5px;height:16px;background:#ee9a00;box-shadow:inset 0 0 0 1px rgba(0,0,0,.035)"></div>
<div class="x" style="left:170px;top:372px;width:5px;height:3px;background:#8fbc8f;box-shadow:inset 0 0 0 1px rgba(0,0,0,.035)"></div>
<div class="x" style="left:177px;top:358px;width:5px;height:17px;background:#8b1c62;box-shadow:inset 0 0 0 1px rgba(0,0,0,.035)"></div>
<div class="x" style="left:184px;top:360px;width:5px;height:15px;background:#ee6a50;box-shadow:inset 0 0 0 1px rgba(0,0,0,.035)"></div>
<div class="x" style="left:191px;top:364px;width:5px;height:11px;background:#ff0000;box-shadow:inset 0 0 0 1px rgba(0,0,0,.035)"></div>
<div class="x" style="left:198px;top:351px;width:5px;height:24px;background:#cdb79e;box-shadow:inset 0 0 0 1px rgba(0,0,0,.035)"></div>
<div class="x" style="left:205px;top:357px;width:5px;height:18px;background:#eeee00;box-shadow:inset 0 0 0 1px rgba(0,0,0,.035)"></div>
<div class="x" style="left:212px;top:357px;width:5px;height:18px;background:#eeee00;box-shadow:inset 0 0 0 1px rgba(0,0,0,.035)"></div>
<div class="x" style="left:219px;top:354px;width:5px;height:21px;background:#eeee00;box-shadow:inset 0 0 0 1px rgba(0,0,0,.035)"></div>
<div class="x" style="left:226px;top:363px;width:5px;height:12px;background:#eeee00;box-shadow:inset 0 0 0 1px rgba(0,0,0,.035)"></div>
<div class="x" style="left:233px;top:359px;width:5px;height:16px;background:#eeee00;box-shadow:inset 0 0 0 1px rgba(0,0,0,.035)"></div>
<div class="x" style="left:240px;top:357px;width:5px;height:18px;background:#eeee00;box-shadow:inset 0 0 0 1px rgba(0,0,0,.035)"></div>
<div class="x" style="left:247px;top:358px;width:5px;height:17px;background:#eeee00;box-shadow:inset 0 0 0 1px rgba(0,0,0,.035)"></div>
<div class="x" style="left:254px;top:359px;width:5px;height:16px;background:#eeee00;box-shadow:inset 0 0 0 1px rgba(0,0,0,.035)"></div>
<div class="x" style="left:261px;top:359px;width:5px;height:16px;background:#eeee00;box-shadow:inset 0 0 0 1px rgba(0,0,0,.035)"></div>
<div class="x" style="left:268px;top:355px;width:5px;height:20px;background:#eeee00;box-shadow:inset 0 0 0 1px rgba(0,0,0,.035)"></div>
<div class="x" style="left:275px;top:357px;width:5px;height:18px;background:#eeee00;box-shadow:inset 0 0 0 1px rgba(0,0,0,.035)"></div>
<div class="x" style="left:282px;top:356px;width:5px;height:19px;background:#eeee00;box-shadow:inset 0 0 0 1px rgba(0,0,0,.035)"></div>
<div class="x" style="left:289px;top:359px;width:5px;height:16px;background:#eeee00;box-shadow:inset 0 0 0 1px rgba(0,0,0,.035)"></div>
<div class="x" style="left:296px;top:350px;width:5px;height:25px;background:#00cdcd;box-shadow:inset 0 0 0 1px rgba(0,0,0,.035)"></div>
<div class="x" style="left:310px;top:365px;width:5px;height:10px;background:#9ac0cd;box-shadow:inset 0 0 0 1px rgba(0,0,0,.035)"></div>
<div class="x" style="left:317px;top:340px;width:5px;height:35px;background:#eed5d2;box-shadow:inset 0 0 0 1px rgba(0,0,0,.035)"></div>
<div class="x" style="left:324px;top:342px;width:5px;height:33px;background:#eed5d2;box-shadow:inset 0 0 0 1px rgba(0,0,0,.035)"></div>
<div class="x" style="left:331px;top:344px;width:5px;height:31px;background:#cdb79e;box-shadow:inset 0 0 0 1px rgba(0,0,0,.035)"></div>
<div class="x" style="left:338px;top:358px;width:5px;height:17px;background:#eec591;box-shadow:inset 0 0 0 1px rgba(0,0,0,.035)"></div>
<div class="x" style="left:345px;top:356px;width:5px;height:19px;background:#8b7355;box-shadow:inset 0 0 0 1px rgba(0,0,0,.035)"></div>
<div class="x" style="left:352px;top:364px;width:5px;height:11px;background:#8b7355;box-shadow:inset 0 0 0 1px rgba(0,0,0,.035)"></div>
<div class="x" style="left:359px;top:358px;width:5px;height:17px;background:#cdaa7d;box-shadow:inset 0 0 0 1px rgba(0,0,0,.035)"></div>
<div class="x" style="left:366px;top:343px;width:5px;height:32px;background:#eed5d2;box-shadow:inset 0 0 0 1px rgba(0,0,0,.035)"></div>
<div class="x" style="left:373px;top:367px;width:5px;height:8px;background:#b452cd;box-shadow:inset 0 0 0 1px rgba(0,0,0,.035)"></div>
<div class="x" style="left:380px;top:367px;width:5px;height:8px;background:#7a378b;box-shadow:inset 0 0 0 1px rgba(0,0,0,.035)"></div>
<div class="x" style="left:387px;top:360px;width:5px;height:15px;background:#cdb79e;box-shadow:inset 0 0 0 1px rgba(0,0,0,.035)"></div>
<div class="x" style="left:394px;top:360px;width:5px;height:15px;background:#cdb79e;box-shadow:inset 0 0 0 1px rgba(0,0,0,.035)"></div>
<div class="x" style="left:408px;top:369px;width:5px;height:6px;background:#9acd32;box-shadow:inset 0 0 0 1px rgba(0,0,0,.035)"></div>
<div class="x" style="left:415px;top:349px;width:5px;height:26px;background:#cdb79e;box-shadow:inset 0 0 0 1px rgba(0,0,0,.035)"></div>
<div class="x" style="left:422px;top:373px;width:5px;height:2px;background:#7a67ee;box-shadow:inset 0 0 0 1px rgba(0,0,0,.035)"></div>
<div class="x" style="left:429px;top:353px;width:5px;height:22px;background:#ffd700;box-shadow:inset 0 0 0 1px rgba(0,0,0,.035)"></div>
<div class="x" style="left:436px;top:343px;width:5px;height:32px;background:#ffb6c1;box-shadow:inset 0 0 0 1px rgba(0,0,0,.035)"></div>
<div class="x" style="left:443px;top:372px;width:5px;height:3px;background:#cd9b1d;box-shadow:inset 0 0 0 1px rgba(0,0,0,.035)"></div>
<div class="x" style="left:450px;top:354px;width:5px;height:21px;background:#b4eeb4;box-shadow:inset 0 0 0 1px rgba(0,0,0,.035)"></div>
<div class="x" style="left:457px;top:355px;width:5px;height:20px;background:#d9d9d9;box-shadow:inset 0 0 0 1px rgba(0,0,0,.035)"></div>
<div class="x" style="left:464px;top:361px;width:5px;height:14px;background:#3a5fcd;box-shadow:inset 0 0 0 1px rgba(0,0,0,.035)"></div>
<div class="x" style="left:471px;top:360px;width:5px;height:15px;background:#1e90ff;box-shadow:inset 0 0 0 1px rgba(0,0,0,.035)"></div>
<div class="x" style="left:478px;top:369px;width:5px;height:6px;background:#cdb79e;box-shadow:inset 0 0 0 1px rgba(0,0,0,.035)"></div>
<div class="x" style="left:485px;top:361px;width:5px;height:14px;background:#cdb79e;box-shadow:inset 0 0 0 1px rgba(0,0,0,.035)"></div>
<div class="x" style="left:492px;top:370px;width:5px;height:5px;background:#ffd39b;box-shadow:inset 0 0 0 1px rgba(0,0,0,.035)"></div>
<div class="x" style="left:499px;top:341px;width:5px;height:34px;background:#a6a6a6;box-shadow:inset 0 0 0 1px rgba(0,0,0,.035)"></div>
<div class="x" style="left:506px;top:367px;width:5px;height:8px;background:#008b45;box-shadow:inset 0 0 0 1px rgba(0,0,0,.035)"></div>
<div class="x" style="left:513px;top:332px;width:5px;height:43px;background:#eed5d2;box-shadow:inset 0 0 0 1px rgba(0,0,0,.035)"></div>
<div class="x" style="left:520px;top:351px;width:5px;height:24px;background:#eed5d2;box-shadow:inset 0 0 0 1px rgba(0,0,0,.035)"></div>
<div class="x" style="left:156px;top:376px;width:793px;height:2px;background:#00007f"></div>
<div class="t r" style="top:349.30px">IL17RD</div>
<div class="t c" style="top:381.30px">H3K27Ac Mark (Often Found Near Active Regulatory Elements) on 7 cell lines from ENCODE</div>
<div class="t r" style="top:395.30px;right:833px">Layered H3K27Ac</div>
<div class="x" style="left:156px;top:424px;width:793px;height:1px;background:#d22f63"></div>
<div class="t c" style="top:426.90px;color:#4a4a9e">100 vertebrates Basewise Conservation by PhyloP</div>
<div class="t r" style="top:426.30px;color:#4a4a9e">4.88 _</div>
<div class="t r" style="top:451.30px;right:851px;color:#4a4a9e">100 Vert. Cons</div>
<div class="t r" style="top:476.30px;color:#a03c3c">-4.5 _</div>
<div class="x" style="left:371px;top:467px;width:40px;height:1px;background:linear-gradient(90deg,#ffe0e0,#ffb0b0 20%,#ff8080 30%,#ffb0b0 45%,#ff8080 62%,#ffa0a0 80%,#ffe8e8)"></div>
<div class="x" style="left:531px;top:467px;width:43px;height:1px;background:linear-gradient(90deg,#d0d0ff,#6060ff 15%,#b0b0ff 30%,#c8c8ff 50%,#9090ff 75%,#5050ff 92%,#8080ff)"></div>
<div class="x" style="left:687px;top:463px;width:38px;height:1px;background:#ccffcc"></div>
<div class="x" style="left:703px;top:463px;width:6px;height:3px;background:#00fa00"></div>
<div class="x" style="left:846px;top:467px;width:38px;height:1px;background:#ccffcc"></div>
<div class="x" style="left:862px;top:467px;width:6px;height:3px;background:#00fa00"></div>
<div class="t c" style="top:492.90px;font-size:13.22px;color:#0c0c6e">Multiz Alignments of 100 Vertebrates</div>
<div class="t r" style="top:507.30px;color:#e8901c">Gaps</div>
<div class="t r" style="top:522.30px;color:#0c0c6e">Human</div>
<div class="t r" style="top:537.30px;color:#0c0c6e">Rhesus</div>
<div class="t r" style="top:552.30px;color:#0a5a0a">Mouse</div>
<div class="t r" style="top:567.30px;color:#0c0c6e">Dog</div>
<div class="t r" style="top:582.30px;color:#0a5a0a">Elephant</div>
<div class="t r" style="top:597.30px;color:#0a5a0a">Chicken</div>
<div class="t r" style="top:612.30px;color:#0c0c6e">X_tropicalis</div>
<div class="t r" style="top:627.30px;color:#0a5a0a">Zebrafish</div>
<div class="t s" style="left:627.2px;top:507.99999999999994px;color:#e8901c;font-weight:bold;font-size:10.5px;transform-origin:0 11.3px">1</div>
<div class="x" style="left:631px;top:551px;width:1px;height:14px;background:#e8901c"></div>
<div class="b" style="left:233.0px;top:522px;color:#00006e">C</div>
<div class="b" style="left:391.6px;top:522px;color:#00006e">C</div>
<div class="b" style="left:550.2px;top:522px;color:#00006e">A</div>
<div class="b" style="left:708.8px;top:522px;color:#00006e">T</div>
<div class="b" style="left:867.4px;top:522px;color:#00006e">T</div>
<div class="b" style="left:233.0px;top:537px;color:#00006e">C</div>
<div class="b" style="left:391.6px;top:537px;color:#00006e">C</div>
<div class="b" style="left:550.2px;top:537px;color:#00006e">A</div>
<div class="b" style="left:708.8px;top:537px;color:#00006e">T</div>
<div class="b" style="left:867.4px;top:537px;color:#00006e">T</div>
<div class="b" style="left:233.0px;top:552.8px;color:#8c8cb4">-</div>
<div class="b" style="left:391.6px;top:552.8px;color:#8c8cb4">-</div>
<div class="b" style="left:550.2px;top:552px;color:#00006e">A</div>
<div class="b" style="left:708.8px;top:552px;color:#00006e">T</div>
<div class="b" style="left:867.4px;top:552px;color:#00006e">T</div>
<div class="b" style="left:233.0px;top:567px;color:#00006e">C</div>
<div class="b" style="left:391.6px;top:567px;color:#8c8cb4">A</div>
<div class="b" style="left:550.2px;top:567px;color:#8c8cb4">G</div>
<div class="b" style="left:708.8px;top:567px;color:#00006e">T</div>
<div class="b" style="left:867.4px;top:567px;color:#00006e">T</div>
<div class="b" style="left:233.0px;top:582px;color:#00006e">C</div>
<div class="b" style="left:391.6px;top:582.8px;color:#8c8cb4">-</div>
<div class="b" style="left:550.2px;top:582.8px;color:#8c8cb4">-</div>
<div class="b" style="left:708.8px;top:582px;color:#00006e">T</div>
<div class="b" style="left:867.4px;top:582px;color:#8c8cb4">C</div>
<div class="b" style="left:233.0px;top:597.6px;color:#8c8cb4;transform:none">=</div>
<div class="b" style="left:391.6px;top:597.6px;color:#8c8cb4;transform:none">=</div>
<div class="b" style="left:550.2px;top:597.6px;color:#8c8cb4;transform:none">=</div>
<div class="b" style="left:708.8px;top:597.6px;color:#8c8cb4;transform:none">=</div>
<div class="b" style="left:867.4px;top:597.6px;color:#8c8cb4;transform:none">=</div>
<div class="b" style="left:233.0px;top:612.6px;color:#8c8cb4;transform:none">=</div>
<div class="b" style="left:391.6px;top:612.6px;color:#8c8cb4;transform:none">=</div>
<div class="b" style="left:550.2px;top:612.6px;color:#8c8cb4;transform:none">=</div>
<div class="b" style="left:708.8px;top:612.6px;color:#8c8cb4;transform:none">=</div>
<div class="b" style="left:867.4px;top:612.6px;color:#8c8cb4;transform:none">=</div>
<div class="b" style="left:233.0px;top:627.6px;color:#8c8cb4;transform:none">=</div>
<div class="b" style="left:391.6px;top:627.6px;color:#8c8cb4;transform:none">=</div>
<div class="b" style="left:550.2px;top:627.6px;color:#8c8cb4;transform:none">=</div>
<div class="b" style="left:708.8px;top:627.6px;color:#8c8cb4;transform:none">=</div>
<div class="b" style="left:867.4px;top:627.6px;color:#8c8cb4;transform:none">=</div>
<div class="t c" style="top:643.40px">Repeating Elements by RepeatMasker</div>
<div class="t r" style="top:657.30px">RepeatMasker</div>
</div></body></html>
